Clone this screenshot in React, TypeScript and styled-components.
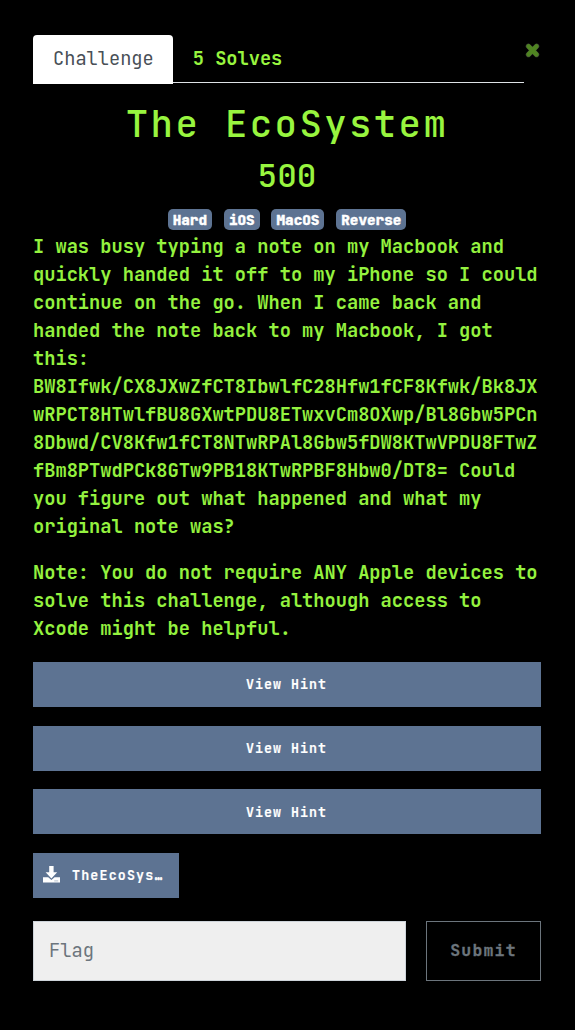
import React from "react";
import styled, { createGlobalStyle } from "styled-components";

const GlobalStyle = createGlobalStyle`
  * { box-sizing: border-box; }
  body {
    margin: 0;
    background: #000;
    color: #98f53f;
    font-family: "JetBrains Mono", "DejaVu Sans Mono", monospace;
    font-size: 18.7px;
    line-height: 28px;
  }
`;

const Modal = styled.main`
  width: 575px;
  height: 1030px;
  padding: 35px 34px 0 33px;
`;

const Header = styled.header`
  display: flex;
  align-items: flex-start;
  height: 49px;
`;

const Tabs = styled.nav`
  display: flex;
  flex: 1;
  height: 48px;
  border-bottom: 1px solid #dee2e6;
`;

const Tab = styled.a<{ $active?: boolean }>`
  height: ${(p) => (p.$active ? 49 : 48)}px;
  padding: 10px 19px 0 20px;
  border-radius: 4px 4px 0 0;
  background: ${(p) => (p.$active ? "#fff" : "transparent")};
  color: ${(p) => (p.$active ? "#495057" : "inherit")};
  font-size: 18.667px;
  font-weight: ${(p) => (p.$active ? 400 : 600)};
`;

const Close = styled.button`
  display: flex;
  width: 17px;
  padding: 8px 0 0 1px;
  border: 0;
  background: none;
`;

const Title = styled.h2`
  margin: 17px 0 0;
  font-size: 37.333px;
  font-weight: 500;
  line-height: 45px;
  letter-spacing: 2.4px;
  text-align: center;
  white-space: nowrap;
`;

const Points = styled.h3`
  margin: 10px 0 0;
  font-size: 32.667px;
  font-weight: 500;
  line-height: 40px;
  text-align: center;
`;

const Tags = styled.div`
  display: flex;
  justify-content: center;
  gap: 11.7px;
  margin-top: 13px;
`;

const Tag = styled.span`
  height: 21px;
  padding: 0 5.1px;
  border-radius: 5px;
  background: #5d7392;
  color: #fff;
  font-size: 14.3px;
  font-weight: 800;
  line-height: 22px;
  -webkit-text-stroke: 0.4px;
`;

const Description = styled.p`
  margin: 3px 0 18px;
  overflow-wrap: break-word;
  color: #94f23f;
  font-weight: 600;

  & + & { margin-top: 0; }
`;

const Hints = styled.div`
  display: flex;
  flex-direction: column;
  gap: 18.67px;
  margin-top: 19px;
`;

const Button = styled.button`
  height: 45px;
  padding: 0 1px 0.5px 0;
  border: 0;
  background: #5d7392;
  color: #fff;
  font: 700 13.3px/20px "JetBrains Mono", "DejaVu Sans Mono", monospace;
  letter-spacing: 1px;
  -webkit-text-stroke: 0.15px;
`;

const FileButton = styled(Button)`
  display: flex;
  align-items: center;
  gap: 12px;
  width: 146px;
  padding: 0 10px;
`;

const FileName = styled.span`
  letter-spacing: 1.18px;
  white-space: nowrap;
`;

const Ellipsis = styled.span`
  -webkit-text-stroke: 0.6px;
`;

const DownloadGlyph = styled.svg`
  width: 17px;
  height: 17px;
  margin-bottom: 2px;
`;

const Form = styled.form`
  display: flex;
  gap: 20px;
  margin-top: 23px;
`;

const FlagInput = styled.input`
  flex: 1;
  min-width: 0;
  height: 60px;
  padding: 0 15px;
  border: 1px solid #ced4da;
  border-radius: 0;
  background: #efefef;
  font: inherit;
  &::placeholder { color: #6c757d; opacity: 1; }
`;

const Submit = styled(Button)`
  width: 115px;
  height: 60px;
  padding: 0 0 2px;
  border: 1px solid #6c757d;
  background: transparent;
  color: #6c757d;
  font-size: 16.5px;
  letter-spacing: 1.2px;
  -webkit-text-stroke: 0.3px;
`;

const tags = ["Hard", "iOS", "MacOS", "Reverse"];
const hints = [1, 2, 3];
const cipher =
  "BW8Ifwk/CX8JXwZfCT8IbwlfC28Hfw1fCF8Kfwk/Bk8JXwRPCT8HTwlfBU8GXwtPDU8ETwxvCm8OXwp/Bl8Gbw5PCn8Dbwd/CV8Kfw1fCT8NTwRPAl8Gbw5fDW8KTwVPDU8FTwZfBm8PTwdPCk8GTw9PB18KTwRPBF8Hbw0/DT8=";
const story = `I was busy typing a note on my Macbook and quickly handed it off to my iPhone so I could continue on the go. When I came back and handed the note back to my Macbook, I got this: ${cipher} Could you figure out what happened and what my original note was?`;

export default function App() {
  return (
    <Modal>
      <GlobalStyle />
      <Header>
        <Tabs>
          <Tab $active>Challenge</Tab>
          <Tab>5 Solves</Tab>
        </Tabs>
        <Close aria-label="Close">
          <svg width="15" height="15" viewBox="0 0 15 15">
            <path
              d="M3.4 3.2 L11.6 11.6 M11.6 3.2 L3.4 11.6"
              stroke="#5d6b50"
              strokeWidth="5.2"
              strokeLinecap="round"
              opacity="0.7"
            />
            <path
              d="M3.6 3.4 L11.4 11.4 M11.4 3.4 L3.6 11.4"
              stroke="#4f8421"
              strokeWidth="4.4"
              strokeLinecap="round"
            />
          </svg>
        </Close>
      </Header>
      <Title>The EcoSystem</Title>
      <Points>500</Points>
      <Tags>
        {tags.map((t) => (
          <Tag key={t}>{t}</Tag>
        ))}
      </Tags>
      <Description>{story}</Description>
      <Description>
        Note: You do not require ANY Apple devices to solve this challenge, although access to Xcode
        might be helpful.
      </Description>
      <Hints>
        {hints.map((h) => (
          <Button key={h}>View Hint</Button>
        ))}
        <FileButton>
          <DownloadGlyph viewBox="0 0 17 17" fill="#fff">
            <path d="M6.2 0h4.4v6.3h3.6L8.4 12.4 2.6 6.3h3.6z" />
            <path d="M0 11.2h5.2l3.2 2.9 3.2-2.9H17v5.3H0z" />
            <path d="M11.2 14.9h4" stroke="#a5b2c3" strokeWidth="0.8" />
          </DownloadGlyph>
          <FileName>
            TheEcoSys<Ellipsis>…</Ellipsis>
          </FileName>
        </FileButton>
      </Hints>
      <Form>
        <FlagInput placeholder="Flag" />
        <Submit type="button">Submit</Submit>
      </Form>
    </Modal>
  );
}
